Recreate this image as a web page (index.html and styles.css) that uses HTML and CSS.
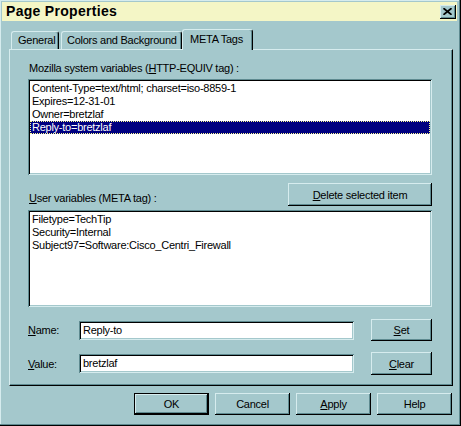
FILE: index.html
```html
<!DOCTYPE html>
<html>
<head>
<meta charset="utf-8">
<title>Page Properties</title>
<link rel="stylesheet" href="styles.css">
</head>
<body>
<div class="window">
  <div class="titlebar">
    <span class="title">Page Properties</span>
    <button class="close" type="button" aria-label="Close">
      <svg width="9" height="7" viewBox="0 0 9 7"><path d="M0.5 0.2 L8.5 6.8 M8.5 0.2 L0.5 6.8" stroke="#000" stroke-width="1.7" fill="none"/></svg>
    </button>
  </div>
  <div class="tabs">
    <div class="tab tab-general">General</div>
    <div class="tab tab-colors">Colors and Background</div>
    <div class="tab tab-meta active">META Tags</div>
  </div>
  <div class="panel">
    <div class="label">Mozilla system variables (<u>H</u>TTP-EQUIV tag) :</div>
    <div class="listbox lb-system">
      <div class="item">Content-Type=text/html; charset=iso-8859-1</div>
      <div class="item">Expires=12-31-01</div>
      <div class="item">Owner=bretzlaf</div>
      <div class="item sel">Reply-to=bretzlaf</div>
    </div>
    <div class="mid-row">
      <div class="label"><u>U</u>ser variables (META tag) :</div>
      <button class="btn btn-delete" type="button"><u>D</u>elete selected item</button>
    </div>
    <div class="listbox lb-user">
      <div class="item">Filetype=TechTip</div>
      <div class="item">Security=Internal</div>
      <div class="item">Subject97=Software:Cisco_Centri_Firewall</div>
    </div>
    <div class="field-row row-name">
      <span class="field-label"><u>N</u>ame:</span>
      <div class="input">Reply-to</div>
      <button class="btn btn-side" type="button"><u>S</u>et</button>
    </div>
    <div class="field-row row-value">
      <span class="field-label"><u>V</u>alue:</span>
      <div class="input">bretzlaf</div>
      <button class="btn btn-side btn-clear" type="button"><u>C</u>lear</button>
    </div>
  </div>
  <div class="footer">
    <button class="btn btn-foot default" type="button">OK</button>
    <button class="btn btn-foot" type="button">Cancel</button>
    <button class="btn btn-foot" type="button"><u>A</u>pply</button>
    <button class="btn btn-foot" type="button">Help</button>
  </div>
</div>
</body>
</html>
```
FILE: styles.css
```css
* { box-sizing: border-box; }
html, body { margin: 0; padding: 0; }
body {
  width: 461px;
  height: 426px;
  overflow: hidden;
  background: #a4c8cc;
  font-family: "Liberation Sans", Arial, sans-serif;
  font-size: 11px;
  letter-spacing: -0.25px;
  color: #000;
}
u { text-decoration: underline; text-underline-offset: 1px; }

.window {
  width: 461px;
  height: 426px;
  padding: 2px 4px 2px 2px;
  display: flex;
  flex-direction: column;
  background: #a4c8cc;
  box-shadow: inset -1px -1px #000, inset -2px -2px #5e8a90, inset 1px 1px #d6ecee;
}

.titlebar {
  height: 19px;
  background: #f4f6c6;
  display: flex;
  align-items: center;
  justify-content: space-between;
  padding: 0 1px 0 4px;
}
.title {
  font-weight: bold;
  font-size: 14px;
  letter-spacing: 0.3px;
  line-height: 19px;
}
.close {
  width: 16px;
  height: 14px;
  border: 0;
  padding: 0;
  margin: 0;
  background: #a4c8cc;
  display: flex;
  align-items: center;
  justify-content: center;
  box-shadow: inset -1px -1px #000, inset 1px 1px #d6ecee, inset -2px -2px #5e8a90;
}
.close svg { display: block; margin: -1px 0 0 -1px; }

.tabs {
  display: flex;
  align-items: flex-end;
  height: 20px;
  margin: 8px 0 0 9px;
  position: relative;
  z-index: 1;
}
.tab {
  height: 18px;
  line-height: 16px;
  padding: 0 0 0 6px;
  background: #a4c8cc;
  border-top: 1px solid #d6ecee;
  border-left: 1px solid #d6ecee;
  border-right: 1px solid #000;
  border-top-left-radius: 3px;
  border-top-right-radius: 3px;
  box-shadow: inset -1px 0 #5e8a90;
  white-space: nowrap;
}
.tab-general { width: 48px; margin-right: 2px; }
.tab-colors { width: 121px; padding-left: 5px; }
.tab-meta {
  width: 71px;
  height: 21px;
  margin-bottom: -1px;
  line-height: 18px;
  padding-left: 7px;
}

.panel {
  margin-left: 7px;
  width: 444px;
  height: 337px;
  border-top: 1px solid #d6ecee;
  border-left: 1px solid #d6ecee;
  border-right: 1px solid #000;
  border-bottom: 1px solid #000;
  box-shadow: inset -1px -1px #5e8a90;
  padding: 12px 20px 0 18px;
  display: flex;
  flex-direction: column;
}

.label {
  line-height: 13px;
  height: 13px;
  margin-left: 1px;
  white-space: nowrap;
}

.listbox {
  margin-top: 4px;
  background: #fff;
  padding: 3px 2px 2px 2px;
  box-shadow: inset 1px 1px #5e8a90, inset -1px -1px #d6ecee, inset 2px 2px #000, inset -2px -2px #a4c8cc;
  overflow: hidden;
}
.lb-system { height: 96px; }
.lb-user { height: 97px; }
.item {
  height: 13px;
  line-height: 13px;
  padding-left: 2px;
  white-space: nowrap;
}
.item.sel {
  background: #000080;
  color: #fff;
  outline: 1px dotted #ffff90;
  outline-offset: -1px;
}

.mid-row {
  margin-top: 8px;
  height: 23px;
  display: flex;
  justify-content: space-between;
  align-items: flex-end;
}
.mid-row .label { margin-bottom: 1px; }

.btn {
  border: 0;
  padding: 0;
  margin: 0;
  background: #a4c8cc;
  font-family: inherit;
  font-size: 11px;
  letter-spacing: -0.25px;
  color: #000;
  text-align: center;
  box-shadow: inset -1px -1px #000, inset 1px 1px #d6ecee, inset -2px -2px #5e8a90;
}
.btn-delete { width: 144px; height: 23px; }

.field-row {
  display: flex;
  align-items: center;
  height: 22px;
}
.row-name { margin-top: 12px; }
.row-value { margin-top: 11px; height: 23px; }
.field-label {
  width: 51px;
  line-height: 13px;
  padding-top: 1px;
}
.input {
  width: 275px;
  height: 19px;
  line-height: 15px;
  padding: 2px 0 0 4px;
  background: #fff;
  box-shadow: inset 1px 1px #5e8a90, inset -1px -1px #d6ecee, inset 2px 2px #000, inset -2px -2px #a4c8cc;
  white-space: nowrap;
}
.btn-side {
  margin-left: auto;
  width: 61px;
  height: 22px;
}
.btn-clear { height: 23px; }

.footer {
  margin: 7px 0 0 7px;
  width: 444px;
  display: flex;
  justify-content: flex-end;
  gap: 6px;
  padding-right: 1px;
}
.btn-foot { width: 75px; height: 22px; }
.btn-foot.default {
  box-shadow: inset 0 0 0 1px #000, inset -2px -2px #000, inset 2px 2px #d6ecee, inset -3px -3px #5e8a90;
}
```
